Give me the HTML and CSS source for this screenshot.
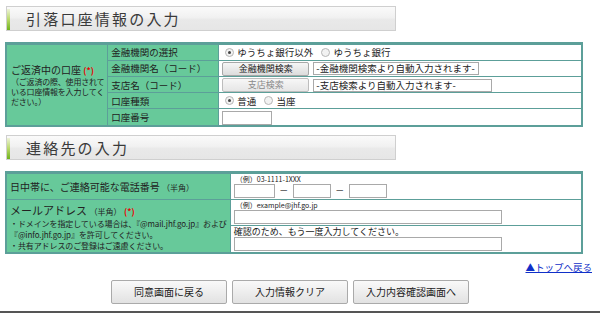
FILE: index.html
```html
<!DOCTYPE html>
<html lang="ja">
<head>
<meta charset="utf-8">
<link rel="stylesheet" href="styles.css">
</head>
<body>
<div class="page">
  <h2 class="sec-head"><span class="bar"></span><span class="sec-title">引落口座情報の入力</span></h2>
  <table class="form t1">
    <tr>
      <th class="main" rowspan="5"><div class="main-lbl">ご返済中の口座 <span class="req">(*)</span></div><div class="note">（ご返済の際、使用されて<br>いる口座情報を入力してく<br>ださい。）</div></th>
      <th class="sub">金融機関の選択</th>
      <td><label class="radio"><span class="rb on"></span>ゆうちょ銀行以外</label><label class="radio"><span class="rb"></span>ゆうちょ銀行</label></td>
    </tr>
    <tr>
      <th class="sub">金融機関名（コード）</th>
      <td><span class="btn small">金融機関検索</span><span class="inp w166">-金融機関検索より自動入力されます-</span></td>
    </tr>
    <tr>
      <th class="sub">支店名（コード）</th>
      <td><span class="btn small dis">支店検索</span><span class="inp w179">-支店検索より自動入力されます-</span></td>
    </tr>
    <tr>
      <th class="sub">口座種類</th>
      <td><label class="radio"><span class="rb on"></span>普通</label><label class="radio"><span class="rb"></span>当座</label></td>
    </tr>
    <tr>
      <th class="sub">口座番号</th>
      <td><span class="inp w50"></span></td>
    </tr>
  </table>

  <h2 class="sec-head second"><span class="bar"></span><span class="sec-title">連絡先の入力</span></h2>
  <table class="form t2">
    <tr>
      <th class="main2">日中帯に、ご連絡可能な電話番号 <span class="small-lbl">（半角）</span></th>
      <td class="val"><div class="ex">（例）03-1111-1XXX</div><div class="phone"><span class="inp w41"></span><span class="dash">－</span><span class="inp w38"></span><span class="dash">－</span><span class="inp w38"></span></div></td>
    </tr>
    <tr>
      <th class="main2 mail" rowspan="2"><div class="mail-lbl">メールアドレス <span class="small-lbl">（半角）</span> <span class="req">(*)</span></div><div class="note2">・ドメインを指定している場合は、『@mail.jhf.go.jp』および<br>『@info.jhf.go.jp』を許可してください。</div><div class="note2">・共有アドレスのご登録はご遠慮ください。</div></th>
      <td class="val"><div class="ex">（例）example@jhf.go.jp</div><span class="inp w268"></span></td>
    </tr>
    <tr>
      <td class="val"><div class="ex2">確認のため、もう一度入力してください。</div><span class="inp w268"></span></td>
    </tr>
  </table>

  <div class="toplink"><a href="#">▲トップへ戻る</a></div>

  <div class="actions">
    <span class="btn big">同意画面に戻る</span>
    <span class="btn big">入力情報クリア</span>
    <span class="btn big">入力内容確認画面へ</span>
  </div>
</div>
<div class="footline"></div>
</body>
</html>
```

FILE: styles.css
```css
html, body {
  margin: 0;
  padding: 0;
  background: #fff;
}
body {
  font-family: "Noto Sans CJK JP", "Noto Sans", sans-serif;
  font-size: 10px;
  color: #222;
  width: 600px;
  height: 313px;
  overflow: hidden;
  position: relative;
}
.page {
  padding: 6px 17px 0 5px;
}
.sec-head {
  margin: 0 0 0 1px;
  width: 388px;
  height: 23px;
  border: 1px solid #cfcfcf;
  background: linear-gradient(#fafafa 0%, #f1f1f1 45%, #e9e9e9 55%, #e6e6e6 100%);
  display: flex;
  align-items: center;
  font-weight: normal;
  box-sizing: content-box;
}
.sec-head .bar {
  align-self: stretch;
  width: 3px;
  margin-top: 2px;
  background: linear-gradient(#eef3d8 0%, #b9d96a 50%, #6fb21c 100%);
}
.sec-title {
  margin-left: 16px;
  font-size: 15px;
  letter-spacing: 2.2px;
  color: #3a3a3a;
  line-height: 1;
}
.sec-head.second {
  margin-top: 8px;
}
table.form {
  border-collapse: collapse;
  width: 578px;
  margin-top: 11px;
  border: 2px solid #5c9f99;
  border-top-width: 3px;
}
table.form th, table.form td {
  border: 1px solid #5c9f99;
  padding: 0 3px;
  font-weight: normal;
  text-align: left;
  vertical-align: middle;
}
table.form th {
  background: #67c99a;
}
.t1 tr {
  height: 16px;
}
.t1 th.main {
  width: 90px;
  padding: 0 3px 0 4px;
  font-size: 10px;
}
.main-lbl {
  line-height: 13px;
}
.note {
  font-size: 8px;
  line-height: 10px;
  white-space: nowrap;
  letter-spacing: -0.2px;
}
.req {
  color: #e00;
  font-weight: bold;
  font-size: 8.5px;
}
.t1 th.sub {
  width: 104px;
  font-size: 9.5px;
  line-height: 14px;
}
.t1 td {
  padding: 0 2px;
  font-size: 9.5px;
  line-height: 14px;
}
.radio {
  display: inline-flex;
  align-items: center;
  margin-right: 5px;
  margin-left: 3px;
}
.rb {
  width: 7px;
  height: 7px;
  border-radius: 50%;
  border: 1px solid #b6b6b6;
  background: #f2f2f2;
  margin-right: 3px;
  display: inline-block;
  position: relative;
}
.rb.on::after {
  content: "";
  position: absolute;
  left: 2px;
  top: 2px;
  width: 3px;
  height: 3px;
  border-radius: 50%;
  background: #444;
}
.btn {
  display: inline-flex;
  align-items: center;
  justify-content: center;
  box-sizing: border-box;
  border: 1px solid #a8a8a8;
  border-radius: 2px;
  background: linear-gradient(#f6f6f6, #dcdcdc);
  color: #222;
}
.btn.small {
  width: 87px;
  height: 14px;
  font-size: 9px;
  margin-right: 4px;
  vertical-align: middle;
}
.btn.small.dis {
  color: #8a8a8a;
  background: linear-gradient(#f7f7f7, #e6e6e6);
  border-color: #bdbdbd;
}
.inp {
  display: inline-block;
  box-sizing: border-box;
  height: 13px;
  border: 1px solid #a9a9a9;
  background: #fff;
  font-size: 9.5px;
  line-height: 11px;
  padding-left: 2px;
  vertical-align: middle;
  white-space: nowrap;
  overflow: hidden;
}
.w166 { width: 166px; }
.w179 { width: 179px; }
.w50 { width: 50px; height: 14px; }
.w41 { width: 41px; height: 14px; }
.w38 { width: 38px; height: 14px; }
.w268 { width: 268px; height: 14px; }
.t2 th.main2 {
  width: 215px;
  font-size: 10px;
  padding: 0 3px;
}
.t2 tr:first-child {
  height: 25px;
}
.small-lbl {
  font-size: 8px;
}
.mail-lbl {
  font-size: 11px;
  line-height: 13px;
  margin-top: 3px;
}
.note2 {
  font-size: 8px;
  line-height: 11px;
  white-space: nowrap;
  letter-spacing: -0.1px;
}
.t2 td.val {
  padding: 1px 3px 1px 3px;
  vertical-align: top;
}
.ex {
  font-size: 7px;
  line-height: 9px;
  padding-left: 2px;
}
.ex2 {
  font-size: 9px;
  line-height: 10px;
}
.phone {
  display: flex;
  align-items: center;
}
.dash {
  width: 18px;
  text-align: center;
  font-size: 9px;
}
.t2 td.val .inp {
  display: block;
}
.t2 td.val .phone .inp {
  display: inline-block;
}
.toplink {
  text-align: right;
  margin-top: 7px;
  margin-right: -9px;
  font-size: 9.5px;
  line-height: 12px;
}
.toplink a {
  color: #1030c8;
  text-decoration: underline;
}
.actions {
  display: flex;
  gap: 5px;
  margin-top: 7px;
  margin-left: 106px;
}
.btn.big {
  width: 116px;
  height: 24px;
  font-size: 10px;
  border-color: #aaa;
  background: linear-gradient(#f9f9f9, #e2e2e2);
}
.footline {
  position: absolute;
  left: 0;
  right: 0;
  bottom: 0;
  height: 2px;
  background: #555;
}
```
